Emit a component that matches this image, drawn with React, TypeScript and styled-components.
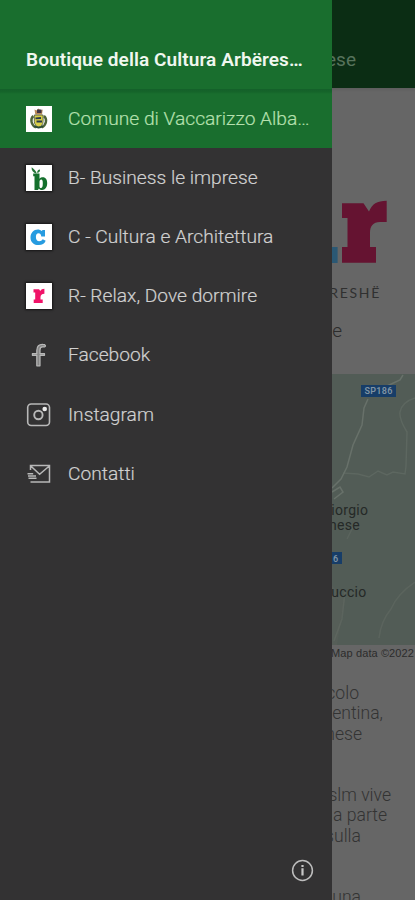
import React from 'react';
import styled, { createGlobalStyle } from 'styled-components';

const Global = createGlobalStyle`
  * { box-sizing: border-box; }
  body { margin: 0; background: #333; font-family: Roboto, "Liberation Sans", sans-serif; }
`;

const Screen = styled.div`
  display: grid;
  grid-template-columns: 332px 83px;
  width: 415px;
  height: 900px;
  overflow: hidden;
`;

const Drawer = styled.nav`
  display: flex;
  flex-direction: column;
  background: #333233;
  height: 900px;
`;

const DrawerHeader = styled.header`
  height: 89px;
  padding: 47px 0 0 26px;
  background: #196e2e;
`;

const DrawerTitle = styled.h1`
  margin: 0;
  font-size: 19px;
  line-height: 25px;
  font-weight: 600;
  letter-spacing: 0.09px;
  white-space: nowrap;
  color: #f0f7ef;
`;

const Menu = styled.div`
  flex: 1;
`;

const MenuRow = styled.a<{ $active?: boolean }>`
  display: flex;
  align-items: center;
  gap: 16px;
  height: 59.2px;
  padding-left: 26px;
  background: ${(p) => (p.$active ? 'linear-gradient(#14602a 0, #15652a 3px, #196e2e 5px)' : 'transparent')};
  color: ${(p) => (p.$active ? '#b5e0ae' : '#d0d0d0')};
`;

const IconSlot = styled.span<{ $tile?: boolean; $halo?: boolean }>`
  display: flex;
  align-items: center;
  justify-content: center;
  width: 26px;
  height: 26px;
  background: ${(p) => (p.$tile ? '#fff' : 'transparent')};
  box-shadow: ${(p) => (p.$halo ? '0 0 2px 1px rgba(0, 0, 0, 0.6)' : 'none')};
  svg { display: block; }
`;

const Label = styled.span`
  font-size: 19.2px;
  font-weight: 300;
  line-height: 26px;
  white-space: nowrap;
  -webkit-text-stroke: 0.2px currentColor;
`;

const DrawerFooter = styled.footer`
  display: flex;
  justify-content: flex-end;
  padding: 0 18px 18px 0;
`;

const Page = styled.main`
  display: flex;
  flex-direction: column;
  height: 900px;
  overflow: hidden;
  background: #666;
`;

const PageBar = styled.header`
  display: flex;
  justify-content: flex-end;
  flex: none;
  height: 88px;
  padding: 47px 59px 0 0;
  font-size: 19px;
  line-height: 25px;
  color: #57735c;
  background: #0b2d14;
`;

const Hero = styled.section`
  flex: none;
  height: 286px;
  padding-top: 108px;
  background: linear-gradient(#5e5e5e 0, #666 4px);
  svg { display: block; }
`;

const Line = styled.div<{ $end: number }>`
  display: flex;
  justify-content: flex-end;
  padding-right: ${(p) => p.$end}px;
  white-space: nowrap;
`;

const Brand = styled(Line)`
  margin-top: 18px;
  font-family: Lato, sans-serif;
  font-size: 14px;
  line-height: 20px;
  letter-spacing: 1.7px;
  color: #303030;
`;

const Subtitle = styled(Line)`
  margin-top: 15px;
  font-size: 19px;
  font-weight: 300;
  line-height: 26px;
  color: #2c2c2c;
`;

const MapArea = styled.section`
  flex: none;
  height: 271px;
  svg { display: block; }
`;

const MapCredit = styled(Line)`
  flex: none;
  height: 38px;
  padding-top: 1px;
  font-family: "Liberation Sans", sans-serif;
  font-size: 11px;
  letter-spacing: 0.1px;
  line-height: 15px;
  color: #2c2c2c;
`;

const Copy = styled.article<{ $space: number }>`
  flex: none;
  height: ${(p) => p.$space}px;
  font-size: 17.6px;
  font-weight: 300;
  line-height: 20.4px;
  color: #333;
`;

const Crest = () => (
  <svg width="26" height="26" viewBox="0 0 26 26">
    <path d="M7.300 10C4 13 5 19 10 21.500M18 10C21.500 13 20.500 19 15.500 21.500" fill="none" stroke="#4d6338" strokeWidth="2.400" />
    <path d="M8.500 3.500l2 1 2-2 2 2 2.200-1-.7 5H9.300z" fill="#b88957" />
    <path d="M11 3.500h4.500v3.500H11z" fill="#3e3444" />
    <path d="M8.300 9h8.800v6.500c0 3-2 5-4.400 6-2.400-1-4.400-3-4.400-6z" fill="#d8cf48" stroke="#46513b" strokeWidth=".8" />
    <path d="M9.500 12.300l5.500-.3M10.500 15.500h5.500" stroke="#29384b" strokeWidth="1.800" />
    <path d="M8.500 20q4.200 3 8.500 0" fill="none" stroke="#294a35" strokeWidth="1.800" />
  </svg>
);

const BusinessMark = () => (
  <svg width="26" height="26" viewBox="0 0 26 26">
    <g transform="translate(-1.300 0)">
      <path fillRule="evenodd" d="M8.500 8.500h6.300v5.300c1-1.200 2-1.600 3.300-1.600 3 0 4.400 2.500 4.400 5.900 0 4.300-2 6.900-5 6.900-1.500 0-2.600-.6-3.300-1.600L13.300 25H9.800V11.300H8.500zM14.800 17v4c0 1.400.5 2.100 1.400 2.100 1.500 0 1.900-2 1.900-4.900 0-2.600-.4-3.800-1.600-3.800-1.100 0-1.700.9-1.700 2.600z" fill="#15702d" />
      <path d="M12 8.600C11.500 6 9.500 4 7 2.200c-.5 3 1.500 5.500 5 6.400zM12.500 8c-.2-2.200 1-3.200 2.800-3.500.2 2-.8 3.200-2.800 3.500z" fill="#267638" />
    </g>
  </svg>
);

const CultureMark = () => (
  <svg width="26" height="26" viewBox="0 0 26 26">
    <path d="M15.500 7l1.200-1H19v6.500h-3.700C15 10.300 14.100 9.300 12.600 9.300c-1.900 0-2.700 1.500-2.700 3.800 0 2.700 1.100 4.200 3.300 4.200 1.600 0 2.700-.7 3.500-2l3 1.500c-1.200 2.900-3.600 4.300-6.900 4.300-5 0-8.300-3-8.300-7.700C4.500 8.800 7.700 5.500 11.900 5.500c1.400 0 2.600.5 3.600 1.500z" fill="#269be0" />
  </svg>
);

const RelaxMark = () => (
  <svg width="26" height="26" viewBox="0 0 26 26">
    <path d="M7.500 6.200h5.600L14.200 8c1-1.500 2.300-2.300 4.200-2.300v5.100c-2.600 0-3.900 1.200-3.900 3.400v2.300h2.200v3.400H7.700v-3.400h1.500V9.600H7.500z" fill="#f01368" />
  </svg>
);

const FacebookIcon = () => (
  <svg width="26" height="26" viewBox="0 0 26 26" fill="#858585" stroke="#b8b8b8" strokeWidth="1.200" strokeLinejoin="round">
    <path d="M10.800 23.800V13.300H6.400v-1.600h4.400V8.500c0-4.200 2.200-6.400 6-6.200 2.900 0 3.400 2.200 1.800 2.600h-2c-1.900 0-2.600 1-2.600 3v3.800h4.500v1.600H14v10.500z" />
  </svg>
);

const InstagramIcon = () => (
  <svg width="26" height="26" viewBox="0 0 26 26" fill="none" stroke="#b8b8b8">
    <rect x="1.700" y="2" width="21.800" height="21.500" rx="3.500" strokeWidth="1.600" />
    <circle cx="12.400" cy="13" r="4.200" strokeWidth="1.900" />
    <circle cx="18.700" cy="7" r="2.300" fill="#ededed" stroke="none" />
  </svg>
);

const MailIcon = () => (
  <svg width="26" height="26" viewBox="0 0 26 26" fill="none" stroke="#b8b8b8" strokeWidth="1.500">
    <path d="M4.500 9V4.600h19v16.500h-19M4.800 5l8.800 8.200L23.300 5M1.500 12.700h5.700M2 15h8M2.500 17.200h8" />
  </svg>
);

const InfoIcon = () => (
  <svg width="23" height="23" viewBox="0 0 23 23">
    <circle cx="11.500" cy="11.500" r="9.900" fill="none" stroke="#bdbdbd" strokeWidth="1.500" />
    <path d="M11.500 9.200v7.300M11.500 6v2" stroke="#c8c8c8" strokeWidth="2.200" />
  </svg>
);

const BrandMark = () => (
  <svg width="83" height="69" viewBox="0 0 83 69">
    <path d="M0 51h5.600v16H0z" fill="#2b5874" />
    <path d="M10 7.300h21.500l5.500 8.200C40 8 45 4.700 54.700 4.700V26H48c-7 0-10 4-10 11v14h6v15.800H10V51h5.500V22H10z" fill="#651331" />
  </svg>
);

const RoadMap = () => (
  <svg width="83" height="271" viewBox="0 0 83 271" fontFamily="Roboto, sans-serif">
    <rect width="83" height="271" fill="#525c56" />
    <path d="M0 211l13 15-8 45H0z" fill="#565e58" />
    <g fill="none" stroke="#68716a" strokeWidth="1.500">
      <path d="M71 1l-3 5-13 6M36 25l-4 9-2 17-9 20-6 22L9 105 0 114M0 118l8-5 3 5-9 7" />
      <path d="M83 24q-13 4-15 14-1 7 7 20l-1 34-1 8-12-2-6 3-9-4-9 6-11-3-15-1" opacity=".5" />
      <path d="M22 151l-7 14M13 218l-3 27-8 22M83 208q-18 12-24 27-10 12-12 29" opacity=".4" />
    </g>
    <rect x="29" y="11" width="35" height="12" fill="#173d68" />
    <text x="46.500" y="20.200" textAnchor="middle" fontSize="9" fontWeight="600" fill="#8094a4" letterSpacing=".3">SP186</text>
    <rect x="-4" y="178" width="14" height="12" fill="#173d68" />
    <text x="1" y="187.500" fontSize="9" fontWeight="600" fill="#8094a4">6</text>
    <g fill="#252927" fontSize="14" textAnchor="end" letterSpacing=".3">
      <text x="36.300" y="141">iorgio</text>
      <text x="28" y="156">nese</text>
      <text x="34.500" y="223">uccio</text>
    </g>
  </svg>
);

const items = [
  { label: 'Comune di Vaccarizzo Alba…', Icon: Crest, tile: true },
  { label: 'B- Business le imprese', Icon: BusinessMark, tile: true },
  { label: 'C - Cultura e Architettura', Icon: CultureMark, tile: true },
  { label: 'R- Relax, Dove dormire', Icon: RelaxMark, tile: true },
  { label: 'Facebook', Icon: FacebookIcon, tile: false },
  { label: 'Instagram', Icon: InstagramIcon, tile: false },
  { label: 'Contatti', Icon: MailIcon, tile: false },
];

export default function App() {
  return (
    <>
      <Global />
      <Screen>
        <Drawer>
          <DrawerHeader>
            <DrawerTitle>Boutique della Cultura Arbëres…</DrawerTitle>
          </DrawerHeader>
          <Menu>
            {items.map(({ label, Icon, tile }, i) => (
              <MenuRow key={label} $active={i === 0}>
                <IconSlot $tile={tile} $halo={tile && i > 0}><Icon /></IconSlot>
                <Label>{label}</Label>
              </MenuRow>
            ))}
          </Menu>
          <DrawerFooter><InfoIcon /></DrawerFooter>
        </Drawer>
        <Page>
          <PageBar>ese</PageBar>
          <Hero>
            <BrandMark />
            <Brand $end={34}>RESHË</Brand>
            <Subtitle $end={73}>e</Subtitle>
          </Hero>
          <MapArea><RoadMap /></MapArea>
          <MapCredit $end={1}>Map data ©2022</MapCredit>
          <Copy $space={102}>
            <Line $end={56}>colo</Line>
            <Line $end={32}>entina,</Line>
            <Line $end={53}>nese</Line>
          </Copy>
          <Copy $space={102}>
            <Line $end={24}>slm vive</Line>
            <Line $end={28}>na parte</Line>
            <Line $end={54}>sulla</Line>
          </Copy>
          <Copy $space={30}>
            <Line $end={54}>una</Line>
          </Copy>
        </Page>
      </Screen>
    </>
  );
}
